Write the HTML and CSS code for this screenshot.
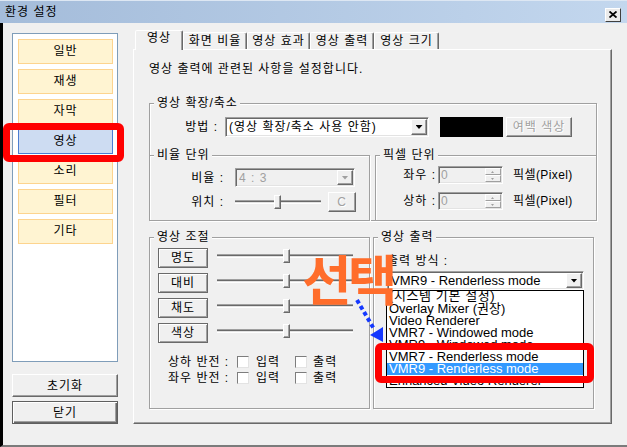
FILE: index.html
```html
<!DOCTYPE html>
<html lang="ko">
<head>
    <meta charset="UTF-8">
    <title>환경 설정</title>
    <link rel="stylesheet" href="styles.css">
</head>
<body>
    <div class="titlebar">
        <span class="title">환경 설정</span>
        <span class="close-btn">
            <svg width="8" height="7" viewBox="0 0 8 7"><path d="M0.5 0.5 L7.5 6.5 M7.5 0.5 L0.5 6.5" stroke="#000" stroke-width="1.8"/></svg>
        </span>
    </div>

    <div class="frame">
        <div class="sidebar">
            <div class="nav-list">
                <div class="nav-item">일반</div>
                <div class="nav-item">재생</div>
                <div class="nav-item">자막</div>
                <div class="nav-item active">영상</div>
                <div class="nav-item">소리</div>
                <div class="nav-item">필터</div>
                <div class="nav-item">기타</div>
            </div>
            <div class="btn side-btn">초기화</div>
            <div class="btn side-btn default">닫기</div>
        </div>

        <div class="tab-control">
            <div class="tab-strip">
                <div class="tab active">영상</div>
                <div class="tab w64">화면 비율</div>
                <div class="tab w63">영상 효과</div>
                <div class="tab w64">영상 출력</div>
                <div class="tab w65">영상 크기</div>
            </div>
            <div class="tab-pane">
                <p class="desc">영상 출력에 관련된 사항을 설정합니다.</p>

                <div class="group scale-group">
                    <span class="group-title">영상 확장/축소</span>
                    <div class="method-row">
                        <span class="lbl method-lbl">방법 :</span>
                        <div class="combo method-combo">
                            <span class="combo-text">(영상 확장/축소 사용 안함)</span>
                            <span class="drop-btn"><i class="tri"></i></span>
                        </div>
                        <div class="swatch"></div>
                        <div class="btn disabled color-btn">여백 색상</div>
                    </div>
                    <div class="subgroups">
                        <div class="group ratio-group">
                            <span class="group-title">비율 단위</span>
                            <div class="field-row ratio-row">
                                <span class="lbl ratio-lbl">비율 :</span>
                                <div class="combo disabled ratio-combo">
                                    <span class="combo-text">4 : 3</span>
                                    <span class="drop-btn"><i class="tri"></i></span>
                                </div>
                            </div>
                            <div class="field-row pos-row">
                                <span class="lbl ratio-lbl">위치 :</span>
                                <div class="slider pos-slider">
                                    <div class="track"></div>
                                    <div class="thumb" style="left: 39px"></div>
                                </div>
                                <div class="btn disabled c-btn">C</div>
                            </div>
                        </div>
                        <div class="group pixel-group">
                            <span class="group-title">픽셀 단위</span>
                            <div class="field-row px-row">
                                <span class="lbl px-lbl">좌우 :</span>
                                <div class="spin">
                                    <span class="spin-val">0</span>
                                    <span class="spin-btns"><i class="spin-up"></i><i class="spin-down"></i></span>
                                </div>
                                <span class="unit">픽셀(Pixel)</span>
                            </div>
                            <div class="field-row px-row second">
                                <span class="lbl px-lbl">상하 :</span>
                                <div class="spin">
                                    <span class="spin-val">0</span>
                                    <span class="spin-btns"><i class="spin-up"></i><i class="spin-down"></i></span>
                                </div>
                                <span class="unit">픽셀(Pixel)</span>
                            </div>
                        </div>
                    </div>
                </div>

                <div class="bottom-groups">
                    <div class="group adjust-group">
                        <span class="group-title">영상 조절</span>
                        <div class="adj-rows">
                            <div class="adj-row">
                                <div class="btn adj-btn">명도</div>
                                <div class="slider adj-slider"><div class="track"></div><div class="thumb" style="left: 66px"></div></div>
                            </div>
                            <div class="adj-row">
                                <div class="btn adj-btn">대비</div>
                                <div class="slider adj-slider"><div class="track"></div><div class="thumb" style="left: 66px"></div></div>
                            </div>
                            <div class="adj-row">
                                <div class="btn adj-btn">채도</div>
                                <div class="slider adj-slider"><div class="track"></div><div class="thumb" style="left: 66px"></div></div>
                            </div>
                            <div class="adj-row">
                                <div class="btn adj-btn">색상</div>
                                <div class="slider adj-slider"><div class="track"></div><div class="thumb" style="left: 66px"></div></div>
                            </div>
                        </div>
                        <div class="flip-rows">
                            <div class="flip-row">
                                <span class="flip-label">상하 반전 :</span>
                                <span class="check"></span><span>입력</span>
                                <span class="check gap"></span><span>출력</span>
                            </div>
                            <div class="flip-row">
                                <span class="flip-label">좌우 반전 :</span>
                                <span class="check"></span><span>입력</span>
                                <span class="check gap"></span><span>출력</span>
                            </div>
                        </div>
                    </div>

                    <div class="group output-group">
                        <span class="group-title">영상 출력</span>
                        <div class="out-label">출력 방식 :</div>
                        <div class="out-combo-wrap">
                            <div class="combo out-combo">
                                <span class="combo-text">VMR9 - Renderless mode</span>
                                <span class="drop-btn"><i class="tri"></i></span>
                            </div>
                            <div class="dropdown-list">
                                <div class="list-item first">(시스템 기본 설정)</div>
                                <div class="list-item">Overlay Mixer (권장)</div>
                                <div class="list-item">Video Renderer</div>
                                <div class="list-item">VMR7 - Windowed mode</div>
                                <div class="list-item">VMR9 - Windowed mode</div>
                                <div class="list-item">VMR7 - Renderless mode</div>
                                <div class="list-item selected">VMR9 - Renderless mode</div>
                                <div class="list-item">Enhanced Video Renderer</div>
                            </div>
                        </div>
                    </div>
                </div>
            </div>
        </div>
    </div>

    <!-- 강조 표시 -->
    <div class="mark mark-nav"></div>
    <div class="mark mark-list"></div>
    <div class="callout">선택</div>
    <svg class="arrow" width="627" height="447" viewBox="0 0 627 447">
        <path d="M357 300 L374 329" stroke="#1438ff" stroke-width="4" stroke-dasharray="4 3" fill="none"/>
        <polygon points="383,342 383,327 370,335" fill="#1438ff"/>
    </svg>
</body>
</html>
```

FILE: styles.css
```css
body {
    margin: 0;
    width: 627px;
    height: 447px;
    overflow: hidden;
    position: relative;
    background: #f0f0f0;
    font-family: "Liberation Sans", "Noto Sans CJK KR", sans-serif;
    font-size: 12px;
    line-height: 14px;
    letter-spacing: 1px;
    color: #000;
}

p {
    margin: 0;
}

/* 제목 표시줄 */
.titlebar {
    height: 23px;
    box-sizing: border-box;
    display: flex;
    align-items: center;
    justify-content: space-between;
    padding: 0 6px 0 5px;
    border-top: 1px solid #dde7f3;
    background: linear-gradient(to right, #a4bcda, #c3d7ee);
}

.close-btn {
    width: 16px;
    height: 14px;
    margin-top: 5px;
    box-sizing: border-box;
    display: flex;
    align-items: center;
    justify-content: center;
    border: 1px solid;
    border-color: #fff #404040 #404040 #fff;
    background: #ebebeb;
}

.close-btn svg {
    display: block;
}

.frame {
    display: flex;
    align-items: flex-start;
    height: 424px;
    box-sizing: border-box;
    border-left: 3px solid #000;
    border-bottom: 2px solid #7b7b7b;
}

/* 왼쪽 메뉴 */
.sidebar {
    flex: none;
    width: 106px;
    margin: 10px 0 0 9px;
}

.nav-list {
    height: 329px;
    box-sizing: border-box;
    border: 1px solid #7f9db9;
    background: #fff;
    padding: 5px 4px 0 5px;
    display: flex;
    flex-direction: column;
    gap: 5px;
}

.nav-item {
    height: 25px;
    box-sizing: border-box;
    border: 1px solid #fdd48e;
    background: #fff4d2;
    text-align: center;
    line-height: 23px;
}

.nav-item.active {
    background: #cddcf2;
    border-color: #4a7dd2;
}

.btn {
    box-sizing: border-box;
    display: flex;
    align-items: center;
    justify-content: center;
    border: 1px solid;
    border-color: #fff #696969 #696969 #fff;
    box-shadow: inset -1px -1px #a0a0a0;
    background: #f0f0f0;
    white-space: nowrap;
}

.btn.default {
    border-color: #5f5f5f;
    box-shadow: inset 1px 1px #fff, inset -1px -1px #696969, inset -2px -2px #a0a0a0;
}

.btn.disabled {
    color: #a0a0a0;
    text-shadow: 1px 1px #fff;
}

.side-btn {
    height: 23px;
    margin-top: 12px;
}

.side-btn.default {
    margin-top: 4px;
}

/* 탭 */
.tab-control {
    flex: none;
    width: 479px;
    margin: 7px 0 0 15px;
}

.tab-strip {
    display: flex;
    align-items: flex-end;
    height: 19px;
    padding-left: 2px;
}

.tab {
    height: 17px;
    box-sizing: border-box;
    padding-top: 2px;
    border: 1px solid;
    border-bottom: none;
    border-color: #fff #696969 transparent #fff;
    box-shadow: inset -1px 0 #a0a0a0;
    border-radius: 2px 2px 0 0;
    text-align: center;
    line-height: 13px;
    white-space: nowrap;
}

.tab.w63 { width: 63px; }
.tab.w64 { width: 64px; }
.tab.w65 { width: 65px; }

.tab.active {
    width: 48px;
    height: 20px;
    margin-bottom: -1px;
    padding-top: 1px;
    position: relative;
    z-index: 1;
    background: #f0f0f0;
}

.tab-pane {
    height: 375px;
    box-sizing: border-box;
    border: 1px solid;
    border-color: #fff #696969 #696969 #fff;
    box-shadow: inset -1px -1px #a0a0a0;
    padding: 0 14px 0 15px;
}

.desc {
    margin-top: 12px;
}

/* 그룹 상자 */
.group {
    box-sizing: border-box;
    border: 1px solid #a0a0a0;
    box-shadow: inset 1px 1px #fff, 1px 1px #fff;
}

.group-title {
    display: block;
    width: max-content;
    height: 14px;
    margin: -8px 0 0 4px;
    padding: 0 2px 0 3px;
    background: #f0f0f0;
    line-height: 14px;
}

.scale-group {
    margin-top: 27px;
}

.method-row {
    display: flex;
    align-items: center;
    height: 20px;
    margin-top: 7px;
}

.lbl {
    text-align: right;
    white-space: nowrap;
}

.method-lbl {
    width: 68px;
    margin-right: 7px;
}

/* 콤보 상자 */
.combo {
    box-sizing: border-box;
    display: flex;
    align-items: center;
    padding: 1px;
    border: 1px solid;
    border-color: #a0a0a0 #fff #fff #a0a0a0;
    box-shadow: inset 1px 1px #696969, inset -1px -1px #e3e3e3;
    background: #fff;
}

.combo-text {
    flex: 1;
    padding-left: 2px;
    white-space: nowrap;
    overflow: hidden;
}

.drop-btn {
    flex: none;
    width: 16px;
    height: 100%;
    box-sizing: border-box;
    display: flex;
    align-items: center;
    justify-content: center;
    border: 1px solid;
    border-color: #fff #696969 #696969 #fff;
    box-shadow: inset -1px -1px #a0a0a0;
    background: #f0f0f0;
}

.tri {
    display: block;
    width: 7px;
    height: 4px;
    background: #000;
    clip-path: polygon(0 0, 100% 0, 50% 100%);
}

.combo.disabled {
    background: #f0f0f0;
    color: #a0a0a0;
}

.combo.disabled .tri {
    background: #a0a0a0;
}

.method-combo {
    width: 204px;
    height: 20px;
}

.swatch {
    width: 63px;
    height: 20px;
    margin-left: 11px;
    background: #000;
}

.color-btn {
    width: 66px;
    height: 20px;
    margin-left: 3px;
}

.subgroups {
    display: flex;
    gap: 5px;
    margin: 18px -1px -1px;
}

.ratio-group {
    width: 221px;
    height: 66px;
}

.pixel-group {
    width: 222px;
    height: 66px;
}

.field-row {
    display: flex;
    align-items: center;
}

.ratio-row {
    height: 19px;
    margin-top: 6px;
}

.pos-row {
    height: 20px;
    margin-top: 5px;
}

.ratio-lbl {
    width: 74px;
    margin-right: 11px;
}

.ratio-combo {
    width: 120px;
    height: 19px;
}

.c-btn {
    width: 28px;
    height: 20px;
    margin-left: 7px;
}

/* 슬라이더 */
.slider {
    position: relative;
    height: 14px;
}

.track {
    height: 4px;
    margin-top: 5px;
    box-sizing: border-box;
    border-top: 1px solid #a0a0a0;
    border-bottom: 1px solid #fff;
    box-shadow: inset 0 1px #696969;
    background: #e3e3e3;
}

.thumb {
    position: absolute;
    top: 0;
    width: 7px;
    height: 14px;
    box-sizing: border-box;
    border: 1px solid;
    border-color: #fff #696969 #696969 #fff;
    box-shadow: inset -1px -1px #a0a0a0;
    background: #f0f0f0;
}

.pos-slider {
    width: 86px;
}

/* 픽셀 단위 */
.px-row {
    height: 18px;
    margin-top: 4px;
}

.px-row.second {
    margin-top: 8px;
}

.px-lbl {
    width: 60px;
    margin-right: 2px;
}

.spin {
    width: 65px;
    height: 18px;
    box-sizing: border-box;
    display: flex;
    padding: 1px;
    border: 1px solid;
    border-color: #a0a0a0 #fff #fff #a0a0a0;
    box-shadow: inset 1px 1px #696969, inset -1px -1px #e3e3e3;
    background: #f0f0f0;
}

.spin-val {
    flex: 1;
    padding-left: 1px;
    color: #a0a0a0;
    line-height: 14px;
}

.spin-btns {
    width: 16px;
    display: flex;
    flex-direction: column;
}

.spin-btns i {
    flex: 1;
    position: relative;
    box-sizing: border-box;
    border: 1px solid;
    border-color: #fff #a0a0a0 #a0a0a0 #fff;
    background: #f0f0f0;
}

.spin-btns i::after {
    content: "";
    position: absolute;
    left: 5px;
    top: 2px;
    width: 3px;
    height: 2px;
    background: #a0a0a0;
}

.spin-up::after {
    clip-path: polygon(50% 0, 100% 100%, 0 100%);
}

.spin-down::after {
    clip-path: polygon(0 0, 100% 0, 50% 100%);
}

.unit {
    margin-left: 10px;
    white-space: nowrap;
    letter-spacing: 0.4px;
}

/* 영상 조절 / 영상 출력 */
.bottom-groups {
    display: flex;
    gap: 3px;
    margin-top: 16px;
}

.adjust-group,
.output-group {
    width: 221px;
    height: 172px;
}

.adj-rows {
    display: flex;
    flex-direction: column;
    gap: 5px;
    margin-top: 4px;
    padding-left: 8px;
}

.adj-row {
    display: flex;
    align-items: flex-start;
    height: 20px;
}

.adj-btn {
    width: 50px;
    height: 20px;
    border-color: #6a6a6a;
    box-shadow: inset 1px 1px #fff, inset -1px -1px #a0a0a0;
}

.adj-slider {
    width: 136px;
    margin: 1px 0 0 9px;
}

.flip-rows {
    display: flex;
    flex-direction: column;
    gap: 2px;
    margin-top: 12px;
    padding-left: 18px;
}

.flip-row {
    display: flex;
    align-items: center;
    height: 14px;
}

.flip-label {
    width: 69px;
    white-space: nowrap;
}

.check {
    width: 12px;
    height: 12px;
    box-sizing: border-box;
    margin-right: 7px;
    border: 1px solid;
    border-color: #7d7d7d #e3e3e3 #e3e3e3 #7d7d7d;
    background: #fff;
}

.check.gap {
    margin-left: 15px;
    margin-right: 6px;
}

.output-group {
    position: relative;
}

.out-label {
    margin: 10px 0 0 13px;
}

.out-combo-wrap {
    position: relative;
    width: 197px;
    margin: 3px 0 0 13px;
}

.out-combo {
    height: 19px;
    font-size: 13px;
    line-height: 15px;
    letter-spacing: 0;
}

.dropdown-list {
    position: absolute;
    top: 19px;
    left: -1px;
    width: 198px;
    height: 98px;
    box-sizing: border-box;
    border: 1px solid #000;
    background: #fff;
    overflow: hidden;
    font-size: 13px;
    line-height: 12px;
    letter-spacing: 0;
}

.list-item {
    height: 12px;
    padding-left: 2px;
    white-space: nowrap;
}

.list-item.first {
    margin-top: -1px;
    height: 13px;
    letter-spacing: 0.6px;
}

.list-item.selected {
    background: #3399ff;
    color: #fff;
}

/* 강조 표시 */
.mark {
    position: absolute;
    box-sizing: border-box;
    border: 7px solid #ff0000;
    border-radius: 6px;
}

.mark-nav {
    left: 3px;
    top: 123px;
    width: 121px;
    height: 39px;
}

.mark-list {
    left: 375px;
    top: 343px;
    width: 219px;
    height: 40px;
}

.callout {
    position: absolute;
    left: 302px;
    top: 251px;
    font-family: "Noto Sans CJK KR", sans-serif;
    font-size: 54px;
    font-weight: 700;
    line-height: 54px;
    letter-spacing: -4px;
    color: #ff6d2b;
}

.arrow {
    position: absolute;
    left: 0;
    top: 0;
    pointer-events: none;
}
```
